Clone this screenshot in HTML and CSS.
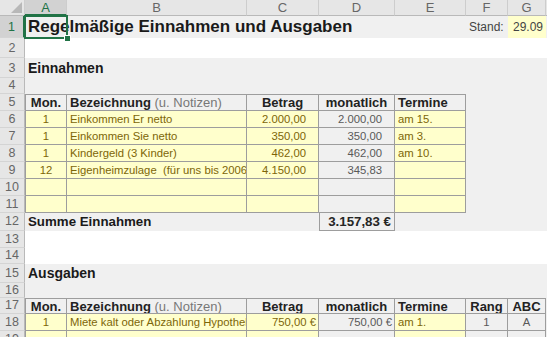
FILE: index.html
```html
<!DOCTYPE html>
<html lang="de">
<head>
  <meta charset="UTF-8" />
  <title>Regelmäßige Einnahmen und Ausgaben</title>
  <link rel="stylesheet" href="styles.css">
</head>
<body>
<div class="sheet">

  <!-- column headers -->
  <div class="row head">
    <div class="corner"><svg width="11" height="11" viewBox="0 0 11 11"><polygon points="11,0 11,11 0,11" fill="#b8b8b8"/></svg></div>
    <div class="ch on">A</div><div class="ch">B</div><div class="ch">C</div><div class="ch">D</div>
    <div class="ch">E</div><div class="ch">F</div><div class="ch">G</div><div class="ch"></div>
  </div>

  <div class="row r1">
    <div class="rh on">1</div>
    <div class="title">Regelmäßige Einnahmen und Ausgaben</div>
    <div class="sel"></div>
    <div class="stand">Stand:</div>
    <div class="y date">29.09</div>
  </div>

  <div class="row r20 white"><div class="rh">2</div></div>

  <div class="row r20">
    <div class="rh">3</div>
    <div class="section">Einnahmen</div>
  </div>

  <div class="row r16"><div class="rh">4</div></div>

  <div class="row">
    <div class="rh">5</div>
    <div class="b bt bl hd ctr">Mon.</div>
    <div class="b bt hd">Bezeichnung <span class="note">(u. Notizen)</span></div>
    <div class="b bt hd ctr">Betrag</div>
    <div class="b bt hd ctr">monatlich</div>
    <div class="b bt hd">Termine</div>
  </div>

  <div class="row">
    <div class="rh">6</div>
    <div class="b bl y ctr">1</div>
    <div class="b y">Einkommen Er netto</div>
    <div class="b y num">2.000,00</div>
    <div class="b calc num">2.000,00</div>
    <div class="b y">am 15.</div>
  </div>

  <div class="row">
    <div class="rh">7</div>
    <div class="b bl y ctr">1</div>
    <div class="b y">Einkommen Sie netto</div>
    <div class="b y num">350,00</div>
    <div class="b calc num">350,00</div>
    <div class="b y">am 3.</div>
  </div>

  <div class="row">
    <div class="rh">8</div>
    <div class="b bl y ctr">1</div>
    <div class="b y">Kindergeld (3 Kinder)</div>
    <div class="b y num">462,00</div>
    <div class="b calc num">462,00</div>
    <div class="b y">am 10.</div>
  </div>

  <div class="row">
    <div class="rh">9</div>
    <div class="b bl y ctr">12</div>
    <div class="b y">Eigenheimzulage  (für uns bis 2006)</div>
    <div class="b y num">4.150,00</div>
    <div class="b calc num">345,83</div>
    <div class="b y"></div>
  </div>

  <div class="row">
    <div class="rh">10</div>
    <div class="b bl y"></div><div class="b y"></div><div class="b y"></div>
    <div class="b calc"></div><div class="b y"></div>
  </div>

  <div class="row">
    <div class="rh">11</div>
    <div class="b bl y"></div><div class="b y"></div><div class="b y"></div>
    <div class="b calc"></div><div class="b y"></div>
  </div>

  <div class="row r18">
    <div class="rh">12</div>
    <div class="sum">Summe Einnahmen</div>
    <div class="b bl total">3.157,83 €</div>
  </div>

  <div class="row white"><div class="rh">13</div></div>
  <div class="row r16 white"><div class="rh">14</div></div>

  <div class="row r19">
    <div class="rh">15</div>
    <div class="section">Ausgaben</div>
  </div>

  <div class="row r15"><div class="rh">16</div></div>

  <div class="row r16">
    <div class="rh">17</div>
    <div class="b bt bl hd ctr">Mon.</div>
    <div class="b bt hd">Bezeichnung <span class="note">(u. Notizen)</span></div>
    <div class="b bt hd ctr">Betrag</div>
    <div class="b bt hd ctr">monatlich</div>
    <div class="b bt hd">Termine</div>
    <div class="b bt hd ctr">Rang</div>
    <div class="b bt hd ctr">ABC</div>
  </div>

  <div class="row">
    <div class="rh">18</div>
    <div class="b bl y ctr">1</div>
    <div class="b y">Miete kalt oder Abzahlung Hypothek</div>
    <div class="b y num eur">750,00 €</div>
    <div class="b calc num eur">750,00 €</div>
    <div class="b y">am 1.</div>
    <div class="b calc ctr">1</div>
    <div class="b calc ctr">A</div>
  </div>

  <div class="row">
    <div class="rh">19</div>
    <div class="b bl y"></div><div class="b y"></div><div class="b y"></div>
    <div class="b calc"></div><div class="b y"></div>
    <div class="b calc"></div><div class="b calc"></div>
  </div>

</div>
</body>
</html>
```

FILE: styles.css
```css
:root {
  --cols: 25px 42px 180px 72px 76px 71px 42px 38px 40px;
  --fill: #f0f0f0; --yellow: #ffffcc; --line: #9d9d9d;
  --hdr: #e6e6e6; --green: #217346;
}
body{margin:0;width:547px;height:337px;overflow:hidden;background:var(--fill);
     font-family:"Liberation Sans",Arial,sans-serif;color:#222}
.sheet{display:flex;flex-direction:column}

.row{display:grid;grid-template-columns:var(--cols);height:17px;line-height:16px;background:var(--fill)}
.row > div{box-sizing:border-box;overflow:hidden;white-space:pre;padding:0 3px;font-size:11.3px;min-width:0}
.r1{height:22px;line-height:22px}
.r15{height:15px;line-height:15px}
.r16{height:16px;line-height:15px}
.r18{height:18px;line-height:17px}
.r19{height:19px;line-height:19px}
.r20{height:20px;line-height:20px}
.white{background:#fff}

/* headers */
.head{height:16px;line-height:15px}
.head > div{background:var(--hdr);border-right:1px solid #cdcdcd;border-bottom:1px solid #b9b9b9;
            text-align:center;color:#666;font-size:13px}
.head .corner{display:flex;align-items:flex-end;justify-content:flex-end;padding:0 2px 2px 0}
.head .on{background:#d2d2d2;color:var(--green);border-bottom:2px solid var(--green)}
.row > .rh{background:var(--hdr);border-right:1px solid #b9b9b9;border-bottom:1px solid #d4d4d4;
           text-align:center;color:#666;font-size:12.5px;padding:0}
.row > .rh.on{background:#d2d2d2;color:var(--green);border-right:2px solid var(--green)}

/* title row + active cell */
.row > .title{grid-column:2 / 7;grid-row:1;font-size:17px;font-weight:bold;color:#1a1a1a;padding-left:3px}
.row > .sel{grid-column:2;grid-row:1;margin:-1px -1px -1px -1px;border:2px solid var(--green);
            position:relative;z-index:2;overflow:visible}
.sel::after{content:"";position:absolute;right:-5px;bottom:-5px;width:5px;height:5px;
            background:var(--green);border:1px solid #fff}
.row > .stand{grid-column:7;grid-row:1;text-align:right;font-size:12px;color:#444;padding-right:8px}
.row > .date{grid-column:8;grid-row:1;text-align:right;font-size:12px;color:#444;overflow:visible}

.row > .section{grid-column:2 / 6;font-size:14px;font-weight:bold;color:#1a1a1a}
.row > .sum{grid-column:2 / 5;font-size:13.3px;font-weight:bold;color:#1a1a1a}

/* table cells */
.b{border-right:1px solid var(--line);border-bottom:1px solid var(--line)}
.bt{border-top:1px solid var(--line)}
.bl{border-left:1px solid var(--line)}
.y{background:var(--yellow);color:#7d6608}
.calc{color:#595959}
.row > .hd{font-size:13px;font-weight:bold;color:#222}
.note{font-weight:normal;color:#777}
.ctr{text-align:center}
.row > .num{text-align:right;padding-right:12px}
.row > .eur{padding-right:2px}
.row > .total{text-align:right;font-size:13.3px;font-weight:bold;color:#262626;padding-right:3px}
```
